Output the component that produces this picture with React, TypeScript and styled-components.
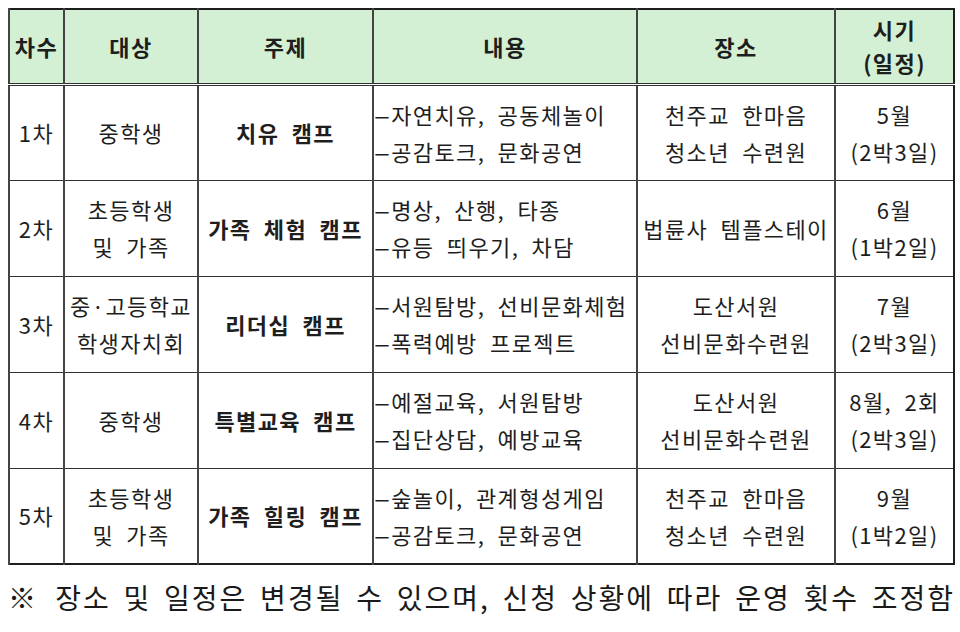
import React from "react";
import styled, { createGlobalStyle } from "styled-components";

interface ICamp {
  round: string,
  target: string[],
  theme: string,
  contents: string[],
  place: string[],
  period: string[]
}

const camps: ICamp[] = [
  {
    round: "1차",
    target: ["중학생"],
    theme: "치유 캠프",
    contents: ["–자연치유, 공동체놀이", "–공감토크, 문화공연"],
    place: ["천주교 한마음", "청소년 수련원"],
    period: ["5월", "(2박3일)"]
  },
  {
    round: "2차",
    target: ["초등학생", "및 가족"],
    theme: "가족 체험 캠프",
    contents: ["–명상, 산행, 타종", "–유등 띄우기, 차담"],
    place: ["법륜사 템플스테이"],
    period: ["6월", "(1박2일)"]
  },
  {
    round: "3차",
    target: ["중·고등학교", "학생자치회"],
    theme: "리더십 캠프",
    contents: ["–서원탐방, 선비문화체험", "–폭력예방 프로젝트"],
    place: ["도산서원", "선비문화수련원"],
    period: ["7월", "(2박3일)"]
  },
  {
    round: "4차",
    target: ["중학생"],
    theme: "특별교육 캠프",
    contents: ["–예절교육, 서원탐방", "–집단상담, 예방교육"],
    place: ["도산서원", "선비문화수련원"],
    period: ["8월, 2회", "(2박3일)"]
  },
  {
    round: "5차",
    target: ["초등학생", "및 가족"],
    theme: "가족 힐링 캠프",
    contents: ["–숲놀이, 관계형성게임", "–공감토크, 문화공연"],
    place: ["천주교 한마음", "청소년 수련원"],
    period: ["9월", "(1박2일)"]
  }
]

const columns = [
  { title: ["차수"], width: 55 },
  { title: ["대상"], width: 134 },
  { title: ["주제"], width: 175 },
  { title: ["내용"], width: 264 },
  { title: ["장소"], width: 198 },
  { title: ["시기", "(일정)"], width: 119 }
]

const GlobalStyle = createGlobalStyle`
  html, body {
    margin: 0;
    padding: 0;
    background: #ffffff;
  }
  body {
    font-family: "Noto Sans CJK KR", "Noto Sans", sans-serif;
    color: #1e1e1e;
  }
`

const Page = styled.div`
  width: 960px;
  height: 632px;
  padding: 8px 0 0 8px;
  box-sizing: border-box;
`

const Table = styled.table`
  width: 945px;
  border-collapse: collapse;
  table-layout: fixed;
  border: 2px solid #1e1e1e;
  font-size: 22px;
  letter-spacing: 1.4px;
  word-spacing: 6px;
`

const HeadRow = styled.tr`
  height: 75px;
  background: #d4f0d4;
`

const BodyRow = styled.tr`
  height: 96px;
`

const HeadCell = styled.th`
  border-left: 2px solid #444;
  border-bottom: 3px double #333;
  font-weight: 700;
  line-height: 33px;
  text-align: center;
  padding: 0;
`

const Cell = styled.td<{ $align?: "left" | "center", $bold?: boolean }>`
  border: 1.5px solid #333;
  border-left: 2px solid #444;
  padding: 0;
  text-align: ${(props) => props.$align || "center"};
  font-weight: ${(props) => props.$bold ? 700 : 400};
  line-height: 37px;
  white-space: nowrap;
  overflow: hidden;
`

const Line = styled.div``

const Dash = styled.span`
  display: inline-block;
  transform: scaleX(1.35);
  transform-origin: left center;
  margin-right: 4px;
`

const Note = styled.div`
  width: 947px;
  margin-top: 15px;
  font-size: 28px;
  letter-spacing: 2px;
  line-height: 34px;
  text-align: justify;
  text-align-last: justify;
  white-space: nowrap;
  color: #1a1a1a;
`

const Lines = ({ items }: { items: string[] }) => {
  return (
    <>
      {items.map((text, index) => (
        <Line key={index}>
          {text.startsWith("–") ? <><Dash>–</Dash>{text.slice(1)}</> : text}
        </Line>
      ))}
    </>
  )
}

const CampRow = ({ camp }: { camp: ICamp }) => {
  return (
    <BodyRow>
      <Cell>{camp.round}</Cell>
      <Cell><Lines items={camp.target} /></Cell>
      <Cell $bold>{camp.theme}</Cell>
      <Cell $align="left"><Lines items={camp.contents} /></Cell>
      <Cell><Lines items={camp.place} /></Cell>
      <Cell><Lines items={camp.period} /></Cell>
    </BodyRow>
  )
}

const App = () => {
  return (
    <Page>
      <GlobalStyle />
      <Table>
        <colgroup>
          {columns.map((col, index) => <col key={index} style={{ width: col.width }} />)}
        </colgroup>
        <thead>
          <HeadRow>
            {columns.map((col, index) => (
              <HeadCell key={index}><Lines items={col.title} /></HeadCell>
            ))}
          </HeadRow>
        </thead>
        <tbody>
          {camps.map((camp, index) => <CampRow key={index} camp={camp} />)}
        </tbody>
      </Table>
      <Note>※ 장소 및 일정은 변경될 수 있으며, 신청 상황에 따라 운영 횟수 조정함</Note>
    </Page>
  );
};

export default App;
